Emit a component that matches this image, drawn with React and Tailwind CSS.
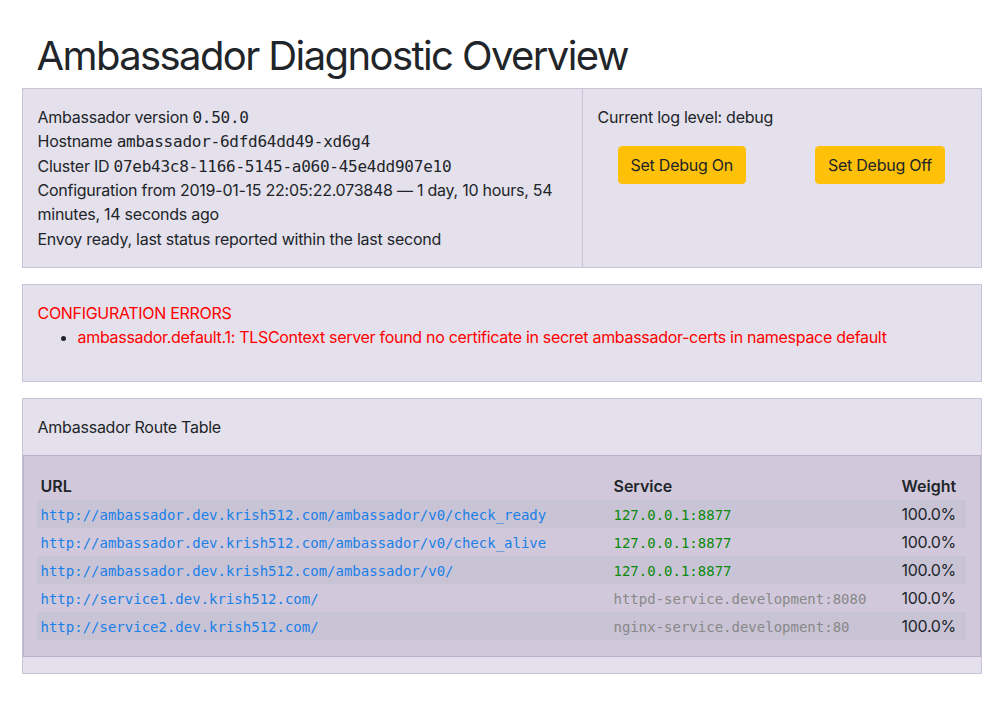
import React from 'react';

const routes = [
    { url: 'http://ambassador.dev.krish512.com/ambassador/v0/check_ready', service: '127.0.0.1:8877', local: true },
    { url: 'http://ambassador.dev.krish512.com/ambassador/v0/check_alive', service: '127.0.0.1:8877', local: true },
    { url: 'http://ambassador.dev.krish512.com/ambassador/v0/', service: '127.0.0.1:8877', local: true },
    { url: 'http://service1.dev.krish512.com/', service: 'httpd-service.development:8080', local: false },
    { url: 'http://service2.dev.krish512.com/', service: 'nginx-service.development:80', local: false },
];

const mono = "font-['DejaVu_Sans_Mono',monospace] leading-none";

export default function App() {
    return (
        <div className="min-h-[723px] bg-white font-['Inter',sans-serif] text-[16px] leading-6 text-[#212529]">
            <div className="mx-auto w-[960px] pt-8">
                <h1 className="px-[15px] mb-2 text-[40px] leading-[48px] font-normal tracking-[-1.6px]">
                    Ambassador Diagnostic Overview
                </h1>

                {/* overview panel */}
                <div className="flex border border-[#c8c3d6] bg-[#e4e1ec]">
                    <div className="w-[560px] border-r border-[#c8c3d6] py-4 px-[15px] leading-[24.35px] tracking-[-0.25px]">
                        <div>Ambassador version <span className={mono}>0.50.0</span></div>
                        <div>Hostname <span className={mono}>ambassador-6dfd64dd49-xd6g4</span></div>
                        <div>Cluster ID <span className={mono}>07eb43c8-1166-5145-a060-45e4dd907e10</span></div>
                        <div>Configuration from 2019-01-15 22:05:22.073848 — 1 day, 10 hours, 54 minutes, 14 seconds ago</div>
                        <div>Envoy ready, last status reported within the last second</div>
                    </div>
                    <div className="flex-1 py-4 px-[15px] tracking-[-0.25px]">
                        <div>Current log level: debug</div>
                        <div className="mt-[17px] flex">
                            <button className="ml-5 rounded bg-[#ffc107] border border-[#ffc107] px-3 py-1.5 leading-6">Set Debug On</button>
                            <button className="ml-[69px] rounded bg-[#ffc107] border border-[#ffc107] px-3 py-1.5 leading-6">Set Debug Off</button>
                        </div>
                    </div>
                </div>

                {/* errors */}
                <div className="mt-4 border border-[#c8c3d6] bg-[#e4e1ec] pt-4 pb-4 px-[15px] text-[#ff0000] tracking-[-0.3px]">
                    <div>CONFIGURATION ERRORS</div>
                    <ul className="mb-4 list-disc pl-10">
                        <li className="marker:text-[#212529]">
                            ambassador.default.1: TLSContext server found no certificate in secret ambassador-certs in namespace default
                        </li>
                    </ul>
                </div>

                {/* route table */}
                <div className="mt-4 border border-[#c8c3d6] bg-[#e4e1ec]">
                    <div className="py-4 px-[15px] tracking-[-0.25px]">Ambassador Route Table</div>
                    <div className="mb-4 border border-[#b9b1c9] bg-[#d1c9db] pl-[13px] pr-[14px] pt-4 pb-4">
                        <table className="w-full border-collapse">
                            <thead>
                                <tr className="h-7 text-left">
                                    <th className="px-1 font-semibold">URL</th>
                                    <th className="w-[288px] px-1 font-semibold">Service</th>
                                    <th className="w-[68px] px-1 font-semibold">Weight</th>
                                </tr>
                            </thead>
                            <tbody>
                                {routes.map((r, i) => (
                                    <tr key={r.url} className={i % 2 === 0 ? 'h-7 bg-[#c9c3d6]' : 'h-7'}>
                                        <td className={`px-1 pt-px text-[14px] text-[#1a7fe6] ${mono}`}>{r.url}</td>
                                        <td className={`px-1 pt-px text-[14px] ${mono} ${r.local ? 'text-[#0a8a0a]' : 'text-[#888888]'}`}>{r.service}</td>
                                        <td className="px-1 tracking-[-0.3px]">100.0%</td>
                                    </tr>
                                ))}
                            </tbody>
                        </table>
                    </div>
                </div>
            </div>
        </div>
    );
}
